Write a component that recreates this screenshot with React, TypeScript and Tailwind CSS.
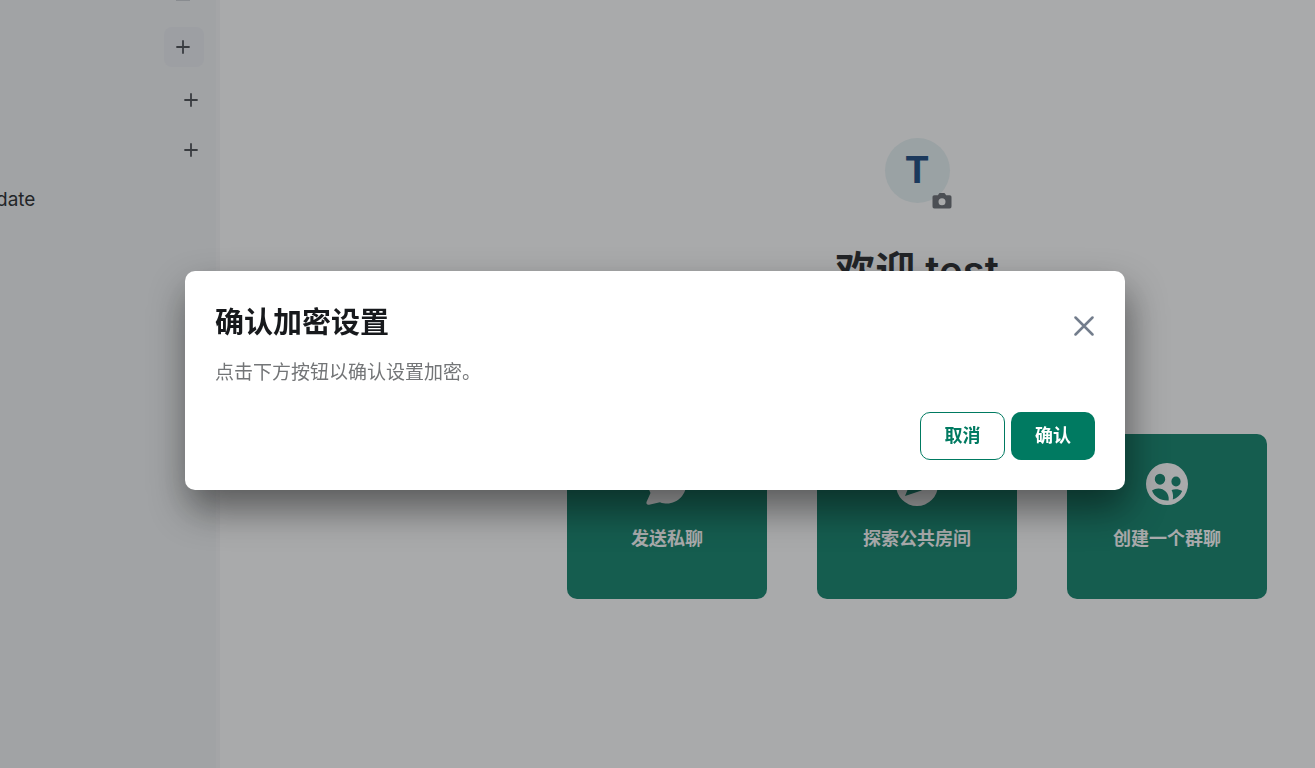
import React from "react";

function PlusIcon() {
  return (
    <svg viewBox="0 0 14 14" className="size-3.5" fill="none" stroke="#3f4248" strokeWidth="1.8" strokeLinecap="round" aria-hidden="true">
      <path d="M7 1v12M1 7h12" />
    </svg>
  );
}

function Sidebar() {
  return (
    <aside className="flex w-[220px] shrink-0 flex-col overflow-hidden border-r-4 border-[#f6f6f8] bg-[#f1f3f4]">
      <div className="flex h-[27px] justify-end pr-[26px]">
        <div className="h-px w-3.5 bg-[#c9cbd0]" />
      </div>
      <div className="flex justify-end pr-3">
        <button aria-label="添加" className="flex size-10 items-center justify-center rounded-lg bg-[#ebecf2] pr-0.5">
          <PlusIcon />
        </button>
      </div>
      <div className="mt-5 flex justify-end pr-[18px]">
        <button aria-label="开始聊天" className="flex h-[25px] items-center">
          <PlusIcon />
        </button>
      </div>
      <div className="mt-[25px] flex justify-end pr-[18px]">
        <button aria-label="添加房间" className="flex h-[25px] items-center">
          <PlusIcon />
        </button>
      </div>
      <a href="#date" className="mt-[25px] -ml-1 text-[19px] leading-[25px] text-[#17191c]">
        date
      </a>
    </aside>
  );
}

const actions = [
  {
    label: "发送私聊",
    icon: (
      <path d="M21 2C10.500 2 2 10.500 2 21c0 4 1 7 2.500 10L.500 40c-.5 1.800.6 3 2.500 2.700l11-2.500C16.500 41.200 19 41.500 21 41.500 32 41.500 40.500 32 40.500 21S32 2 21 2z" />
    ),
  },
  {
    label: "探索公共房间",
    icon: <path fillRule="evenodd" d="M21 2a21 21 0 1 0 0 42 21 21 0 0 0 0-42zm12 9-7.500 17.500L9 34l7-17z" />,
  },
  {
    label: "创建一个群聊",
    icon: (
      <path
        fillRule="evenodd"
        d="M21 1a21 21 0 1 0 0 42 21 21 0 0 0 0-42zM14 11.700a5.200 5.500 0 1 1 0 11 5.200 5.500 0 0 1 0-11zM30 14.500a4.600 5 0 1 1 0 10 4.600 5 0 0 1 0-10zM6 28.500c4.500-3.200 10.500-2.600 14 1.300 2 2.300 3 5 2.700 8.700C14.500 39 8.500 35 6 28.500zM26.800 37.500c.6-3.500.3-6.300-1.200-9.500 3.400-1.300 7.400-.9 10.600 1-1.800 4.200-5.200 7.300-9.400 8.500z"
      />
    ),
  },
];

function Home() {
  return (
    <main className="flex min-w-0 flex-1 flex-col items-center pl-[299px] pt-[138px]">
      <div className="relative flex size-[65px] items-center justify-center rounded-full bg-[#e6f1f3] pb-0.5 text-[37px] font-bold leading-none text-[#0b3d78]">
        T
        <button aria-label="上传头像" className="absolute -bottom-3.5 -right-2 flex size-8 items-center justify-center rounded-full">
          <svg viewBox="0 0 20 16" className="h-4 w-5" aria-hidden="true">
            <path
              fill="#5f6369"
              fillRule="evenodd"
              d="M6.500 1.300C7 .4 7.500 0 8.500 0h3c1 0 1.500.4 2 1.300l.5.900h3.500C19 2.200 19.500 3 19.500 4.500V13c0 1.700-.5 2.500-2 2.500h-15C1 15.500.5 14.700.5 13V4.500C.5 3 1 2.200 2.500 2.200H6zM10 5.300a3.500 3.500 0 1 0 0 7 3.500 3.500 0 0 0 0-7z"
            />
          </svg>
        </button>
      </div>
      <h1 className="mt-[41px] text-[40px] font-semibold leading-[54px] text-[#17191c]">欢迎 test</h1>
      <div className="mt-[136px] flex gap-[50px]">
        {actions.map((action) => (
          <button
            key={action.label}
            className="flex h-[165px] w-[200px] flex-col items-center justify-start rounded-[10px] bg-[#007a61] pt-7 text-[18px] font-semibold leading-6 text-white"
          >
            <svg viewBox="0 0 42 44" className="h-11 w-[42px]" fill="currentColor" aria-hidden="true">
              {action.icon}
            </svg>
            <span className="mt-[21px]">{action.label}</span>
          </button>
        ))}
      </div>
    </main>
  );
}

function ConfirmDialog() {
  return (
    <div className="fixed inset-0 flex items-center justify-center bg-[#323437]/42 pr-[5px] pb-[7px]">
      <section
        role="dialog"
        aria-modal="true"
        aria-labelledby="dialog-title"
        className="w-[940px] rounded-[10px] bg-white p-[30px] shadow-[3px_19px_38px_rgba(0,0,0,0.48)]"
      >
        <header className="flex items-end justify-between">
          <h2 id="dialog-title" className="text-[29px] font-semibold leading-[43px] text-[#17191c]">
            确认加密设置
          </h2>
          <button aria-label="关闭" className="flex h-9 w-[22px] items-center justify-center">
            <svg viewBox="0 0 20 20" className="size-5" fill="none" stroke="#737d8c" strokeWidth="2.500" strokeLinecap="round" aria-hidden="true">
              <path d="M1.500 1.500l17 17M18.500 1.500l-17 17" />
            </svg>
          </button>
        </header>
        <p className="mt-[15px] text-[19px] leading-7 text-[#737577]">点击下方按钮以确认设置加密。</p>
        <div className="mt-[25px] flex justify-end gap-1.5 text-[18px] font-semibold">
          <button className="h-12 w-[85px] rounded-[10px] border border-[#007a61] bg-white pb-0.5 text-[#007a61]">取消</button>
          <button className="h-12 w-[84px] rounded-[10px] bg-[#007a61] pb-0.5 text-white">确认</button>
        </div>
      </section>
    </div>
  );
}

export default function App() {
  return (
    <div className="flex min-h-screen bg-white font-['Inter','Noto_Sans_CJK_SC',sans-serif]">
      <Sidebar />
      <Home />
      <ConfirmDialog />
    </div>
  );
}
